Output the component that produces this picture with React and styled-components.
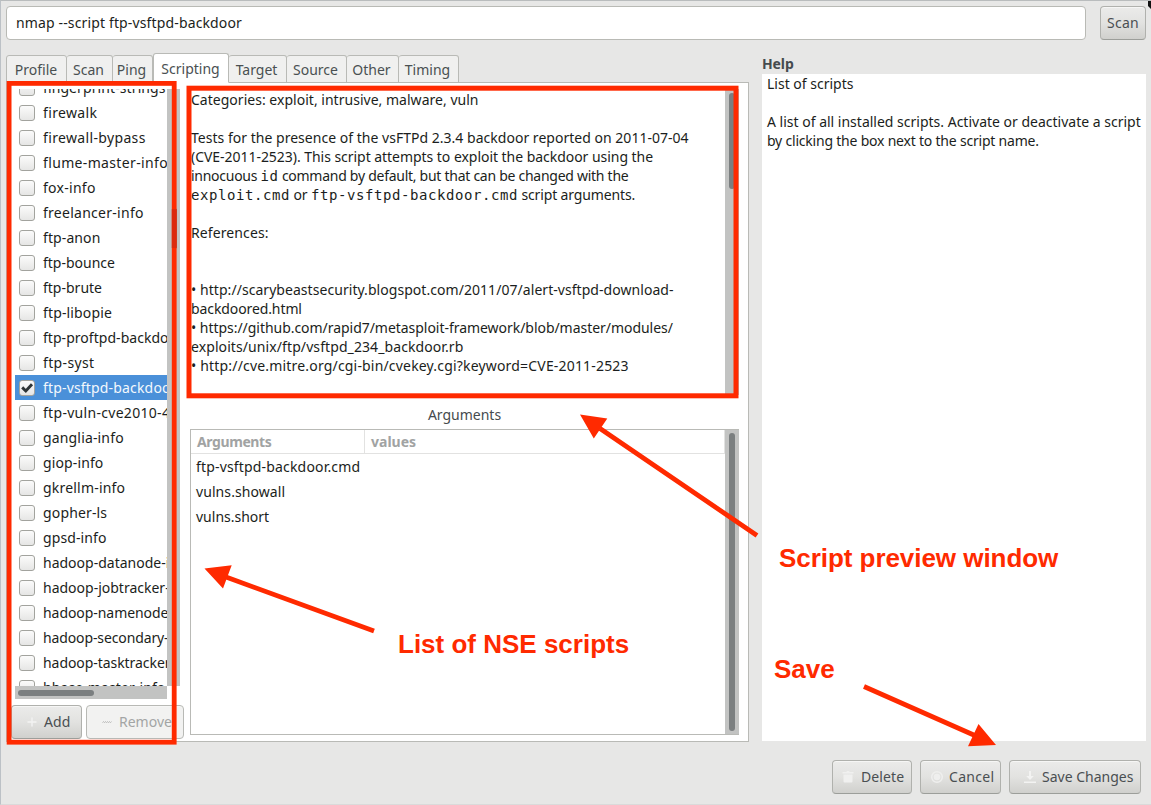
import React from "react";
import styled, { createGlobalStyle, css } from "styled-components";

const RED = "#ff2a00";

const GlobalStyle = createGlobalStyle`
  * { box-sizing: border-box; }
  body {
    margin: 0;
    overflow: hidden;
    background: #e8e8e7;
    color: #1b1e20;
    font-family: "Noto Sans", "Open Sans", sans-serif;
    font-size: 14px;
    line-height: 19px;
  }
`;

const Window = styled.main`
  position: relative;
  display: flex;
  flex-direction: column;
  width: 1151px;
  height: 805px;
  padding: 5px 5px 10px 5px;
  background: #e7e7e6;
  border-top: 1px solid #b9bcbd;
  border-left: 1px solid #bcc1c6;
  border-bottom: 1px solid #dadada;
  overflow: hidden;
`;

const T = styled.span`
  white-space: pre;
  letter-spacing: ${(p) => p.$ls || 0}px;
`;

const CommandBar = styled.header`
  display: flex;
  gap: 14px;
  height: 34px;
  flex: none;
`;

const CommandEntry = styled.div`
  display: flex;
  align-items: center;
  width: 1080px;
  padding: 0 0 1px 9px;
  background: #fff;
  border: 1px solid #b9bab5;
  border-radius: 4px;
`;

const Button = styled.button`
  display: flex;
  align-items: center;
  flex: none;
  gap: ${(p) => p.$gap ?? 0}px;
  width: ${(p) => p.$width}px;
  height: 34px;
  padding: 0 0 2px ${(p) => p.$pad}px;
  font: inherit;
  color: #4a4f52;
  border: 1px solid #b0b1ad;
  border-bottom-color: #9c9e9a;
  border-radius: 4px;
  background: linear-gradient(#ebebea, #e2e2e0 50%, #d0d0cd);
  box-shadow: inset 0 1px 0 #f6f6f5;
  overflow: hidden;
  ${(p) =>
    p.disabled &&
    css`
      color: #a3a5a5;
      background: #f2f2f1;
      border-color: #b8b9b5;
    `}
`;

const Body = styled.div`
  display: flex;
  gap: 13px;
  height: 689px;
  margin-top: 13px;
  flex: none;
`;

const Notebook = styled.section`
  display: flex;
  flex-direction: column;
  width: 743px;
`;

const TabStrip = styled.nav`
  position: relative;
  display: flex;
  align-items: flex-end;
  height: 30px;
  flex: none;
  box-shadow: inset 0 -1px 0 #b9bab6;
`;

const Tab = styled.div`
  display: flex;
  align-items: center;
  justify-content: center;
  width: ${(p) => p.$width}px;
  height: ${(p) => (p.$active ? 30 : 28)}px;
  padding-right: ${(p) => (p.$joined ? 2 : 1)}px;
  color: #4a5052;
  background: ${(p) => (p.$active ? "#fff" : "#f0f0ef")};
  border: 1px solid #b9bab6;
  border-left-width: ${(p) => (p.$joined ? 0 : 1)}px;
  border-bottom-color: ${(p) => (p.$active ? "#fff" : "#b9bab6")};
  border-radius: 3px 3px 0 0;
`;

const Page = styled.div`
  display: flex;
  flex: 1;
  padding: 6px 9px 2px 4px;
  background: #fff;
  border: 1px solid #b9bab6;
  border-top: 0;
`;

const ScriptColumn = styled.div`
  display: flex;
  flex-direction: column;
  width: 174px;
  flex: none;
`;

const ScriptView = styled.div`
  display: grid;
  grid-template-columns: 152px 13px;
  grid-template-rows: 597px 13px;
  margin-left: 4px;
`;

const ScriptList = styled.ul`
  margin: 0;
  padding: 0;
  list-style: none;
  overflow: hidden;
`;

const ScriptRow = styled.li`
  display: flex;
  align-items: center;
  gap: 8px;
  height: 25px;
  padding-left: 4px;
  color: ${(p) => (p.$selected ? "#f3f8fd" : "#1b1e20")};
  background: ${(p) => (p.$selected ? "#4a90d9" : "transparent")};
  &:first-child { margin-top: -14px; }
`;

const CheckBox = styled.span`
  display: grid;
  place-items: center;
  flex: none;
  width: 16px;
  height: 16px;
  border: 1px solid #a2a39e;
  border-radius: 3px;
  background: linear-gradient(#fbfbfb, #e6e6e5);
`;

const Trough = styled.div`
  display: flex;
  padding: ${(p) => p.$padding || "0"};
  background: #c2c3c2;
`;

const Thumb = styled.div`
  width: ${(p) => p.$w}px;
  height: ${(p) => p.$h}px;
  border-radius: 3px;
  background: #7b7f80;
`;

const ListButtons = styled.div`
  display: flex;
  gap: 4px;
  margin-top: 6px;
`;

const Details = styled.div`
  display: flex;
  flex-direction: column;
  width: 549px;
  margin-left: 5px;
`;

const Preview = styled.div`
  display: flex;
  justify-content: space-between;
  height: 306px;
`;

const PreviewText = styled.div`
  padding: 1px 0 0 1px;
`;

const Line = styled.div`
  height: 19px;
  white-space: pre;
  letter-spacing: ${(p) => p.$ls || 0}px;
`;

const Code = styled.code`
  font-family: "DejaVu Sans Mono", monospace;
  font-size: 14px;
  letter-spacing: 0.57px;
`;

const ArgumentsTitle = styled.div`
  height: 34px;
  padding-top: 10px;
  text-align: center;
  color: #454b4e;
`;

const ArgumentsFrame = styled.div`
  display: flex;
  height: 306px;
  border: 1px solid #b9bab6;
  border-right: 0;
`;

const ArgumentsTable = styled.div`
  flex: 1;
`;

const HeaderRow = styled.div`
  display: grid;
  grid-template-columns: 174px 1fr;
  height: 24px;
  border-bottom: 1px solid #e2e2e1;
  border-right: 1px solid #e2e2e1;
  color: #a1a3a3;
  font-weight: 700;
`;

const HeaderCell = styled.div`
  padding: 2px 0 0 6px;
  border-right: ${(p) => (p.$divider ? "1px solid #e2e2e1" : "0")};
`;

const ArgumentRow = styled.div`
  height: 25px;
  padding: 3px 0 0 5px;
`;

const Help = styled.aside`
  width: 384px;
  padding-top: 1px;
`;

const HelpTitle = styled.div`
  height: 20px;
  font-weight: 700;
  color: #454b4e;
`;

const HelpText = styled.div`
  height: 667px;
  padding: 0 0 0 5px;
  background: #fff;
`;

const Actions = styled.footer`
  display: flex;
  justify-content: flex-end;
  gap: 8px;
  margin-top: 18px;
  padding-right: 5px;
`;

const Annotations = styled.div`
  position: absolute;
  inset: -1px 0 0 -1px;
  pointer-events: none;
`;

const Marks = styled.svg`
  position: absolute;
  left: 0;
  top: 0;
`;

const Note = styled.div`
  position: absolute;
  left: ${(p) => p.$x}px;
  top: ${(p) => p.$y}px;
  color: ${RED};
  font: 700 26px/30px "Liberation Sans", Arial, sans-serif;
  letter-spacing: ${(p) => p.$ls || 0}px;
  white-space: pre;
`;

// Script name and its letter spacing in pixels.
const scripts = [
  ["fingerprint-strings", 0.1], ["firewalk", 0.35], ["firewall-bypass", 0.35],
  ["flume-master-info", 0.35], ["fox-info", 0.28], ["freelancer-info", 0.27],
  ["ftp-anon", 0.1], ["ftp-bounce", 0], ["ftp-brute", 0], ["ftp-libopie", 0.15],
  ["ftp-proftpd-backdoor", 0.04], ["ftp-syst", 0.35], ["ftp-vsftpd-backdoor", 0.17],
  ["ftp-vuln-cve2010-4221", 0.3], ["ganglia-info", 0.16], ["giop-info", 0.12],
  ["gkrellm-info", 0.2], ["gopher-ls", 0.15], ["gpsd-info", 0.1],
  ["hadoop-datanode-info", 0], ["hadoop-jobtracker-info", 0],
  ["hadoop-namenode-info", -0.06], ["hadoop-secondary-namenode-info", -0.12],
  ["hadoop-tasktracker-info", -0.06], ["hbase-master-info", 0.1],
];

const tabs = [
  ["Profile", 61], ["Scan", 46], ["Ping", 40], ["Scripting", 76], ["Target", 58],
  ["Source", 60], ["Other", 52], ["Timing", 60],
];

const Check = () => (
  <svg width="14" height="14" viewBox="0 0 14 14">
    <path d="M2.2 6.4 5.8 10 12 3.2" fill="none" stroke="#2e3436" strokeWidth="2.9" />
  </svg>
);
const Plus = () => (
  <svg width="16" height="16" viewBox="0 0 16 16">
    <path d="M8 4.5v9M3.5 9h9" stroke="#f3f3f2" strokeWidth="1.4" />
  </svg>
);
const Minus = () => (
  <svg width="16" height="16" viewBox="0 0 16 16">
    <path d="m3.5 9.7 1-1.2 1 1.2 1-1.2 1 1.2 1-1.2 1 1.2 1-1.2 1 1.2 1-1.2" fill="none" stroke="#b5b6b6" strokeWidth="0.9" />
  </svg>
);
const Trash = () => (
  <svg width="16" height="16" viewBox="0 0 16 16" fill="#f0f0ef">
    <path d="M2.5 4h3.8l.7-1h2l.7 1h3.8v1.6h-11zM3.5 6.4h9v7.2a1 1 0 0 1-1 1h-7a1 1 0 0 1-1-1z" />
  </svg>
);
const Stop = () => (
  <svg width="16" height="16" viewBox="0 0 16 16">
    <circle cx="8" cy="9" r="5.3" fill="none" stroke="#efefee" strokeWidth="1.5" />
    <circle cx="8" cy="9" r="3.3" fill="#efefee" />
  </svg>
);
const Download = () => (
  <svg width="16" height="16" viewBox="0 0 16 16" fill="#f3f3f2">
    <path d="M7 3h2v5h2.8L8 12 4.2 8H7zM2 13.4h12V15H2z" />
  </svg>
);

export default function App() {
  return (
    <>
      <GlobalStyle />
      <Window>
        <CommandBar>
          <CommandEntry><T $ls={0.14}>nmap --script ftp-vsftpd-backdoor</T></CommandEntry>
          <Button $width={46} $pad={6}><T $ls={0.25}>Scan</T></Button>
        </CommandBar>
        <Body>
          <Notebook>
            <TabStrip>
              {tabs.map(([name, width], i) => (
                <Tab key={name} $width={width} $active={i === 3} $joined={i > 0 && i !== 3}>
                  <T>{name}</T>
                </Tab>
              ))}
            </TabStrip>
            <Page>
              <ScriptColumn>
                <ScriptView>
                  <ScriptList>
                    {scripts.map(([name, ls]) => {
                      const selected = name === "ftp-vsftpd-backdoor";
                      return (
                        <ScriptRow key={name} $selected={selected}>
                          <CheckBox>{selected && <Check />}</CheckBox>
                          <T $ls={ls}>{name}</T>
                        </ScriptRow>
                      );
                    })}
                  </ScriptList>
                  <Trough $padding="119px 0 0 5px"><Thumb $w={5} $h={41} /></Trough>
                  <Trough $padding="4px 0 0 3px"><Thumb $w={76} $h={6} /></Trough>
                </ScriptView>
                <ListButtons>
                  <Button $width={71} $pad={12} $gap={4}><Plus /><T $ls={0.1}>Add</T></Button>
                  <Button $width={98} $pad={12} $gap={4} disabled><Minus /><T>Remove</T></Button>
                </ListButtons>
              </ScriptColumn>
              <Details>
                <Preview>
                  <PreviewText>
                    <Line $ls={0.02}>Categories: exploit, intrusive, malware, vuln</Line>
                    <Line />
                    <Line $ls={0.02}>Tests for the presence of the vsFTPd 2.3.4 backdoor reported on 2011-07-04</Line>
                    <Line $ls={-0.04}>(CVE-2011-2523). This script attempts to exploit the backdoor using the</Line>
                    <Line $ls={-0.27}>innocuous <Code>id</Code> command by default, but that can be changed with the</Line>
                    <Line $ls={-0.14}><Code>exploit.cmd</Code> or <Code>ftp-vsftpd-backdoor.cmd</Code> script arguments.</Line>
                    <Line />
                    <Line $ls={0.1}>References:</Line>
                    <Line />
                    <Line />
                    <Line $ls={0.05}>• http://scarybeastsecurity.blogspot.com/2011/07/alert-vsftpd-download-</Line>
                    <Line $ls={-0.1}>backdoored.html</Line>
                    <Line $ls={-0.04}>• https://github.com/rapid7/metasploit-framework/blob/master/modules/</Line>
                    <Line $ls={0.09}>exploits/unix/ftp/vsftpd_234_backdoor.rb</Line>
                    <Line $ls={0.18}>• http://cve.mitre.org/cgi-bin/cvekey.cgi?keyword=CVE-2011-2523</Line>
                  </PreviewText>
                  <Trough $padding="4px 4px 0 4px"><Thumb $w={6} $h={96} /></Trough>
                </Preview>
                <ArgumentsTitle><T>Arguments</T></ArgumentsTitle>
                <ArgumentsFrame>
                  <ArgumentsTable>
                    <HeaderRow>
                      <HeaderCell $divider><T $ls={-0.4}>Arguments</T></HeaderCell>
                      <HeaderCell><T>values</T></HeaderCell>
                    </HeaderRow>
                    <ArgumentRow><T $ls={0.17}>ftp-vsftpd-backdoor.cmd</T></ArgumentRow>
                    <ArgumentRow><T $ls={0.08}>vulns.showall</T></ArgumentRow>
                    <ArgumentRow><T>vulns.short</T></ArgumentRow>
                  </ArgumentsTable>
                  <Trough $padding="3px 4px 0 4px"><Thumb $w={6} $h={298} /></Trough>
                </ArgumentsFrame>
              </Details>
            </Page>
          </Notebook>
          <Help>
            <HelpTitle><T $ls={-0.1}>Help</T></HelpTitle>
            <HelpText>
              <Line>List of scripts</Line>
              <Line />
              <Line>A list of all installed scripts. Activate or deactivate a script</Line>
              <Line $ls={-0.21}>by clicking the box next to the script name.</Line>
            </HelpText>
          </Help>
        </Body>
        <Actions>
          <Button $width={80} $pad={7} $gap={5}><Trash /><T $ls={0.1}>Delete</T></Button>
          <Button $width={81} $pad={8} $gap={4}><Stop /><T $ls={0.3}>Cancel</T></Button>
          <Button $width={132} $pad={12} $gap={4}><Download /><T>Save Changes</T></Button>
        </Actions>
        <Annotations>
          <Marks width="1151" height="805" viewBox="0 0 1151 805" fill="none" stroke={RED}>
            <rect x="9.1" y="83.4" width="165.1" height="658.8" strokeWidth="4.8" />
            <rect x="189" y="88.2" width="547" height="307.6" strokeWidth="5" />
            <path d="M174.2 209v39" stroke="#dc2a0e" strokeWidth="4.8" />
            <path d="M757 535.5 600 428.5M374 631 226 577M864 686.5 976 736" strokeWidth="4.8" />
            <path d="M580 414.5 607.3 418.5 593.8 438.5zM204.5 568.5 231.7 565.3 223 588.5zM996 745 978.5 724 968 746.3z" fill={RED} stroke="none" />
            <path d="M1148 0h3v9l-3-3z" fill="#111" stroke="none" />
          </Marks>
          <Note $x={779} $y={543} $ls={-0.05}>Script preview window</Note>
          <Note $x={398} $y={629}>List of NSE scripts</Note>
          <Note $x={774} $y={654}>Save</Note>
        </Annotations>
      </Window>
    </>
  );
}
